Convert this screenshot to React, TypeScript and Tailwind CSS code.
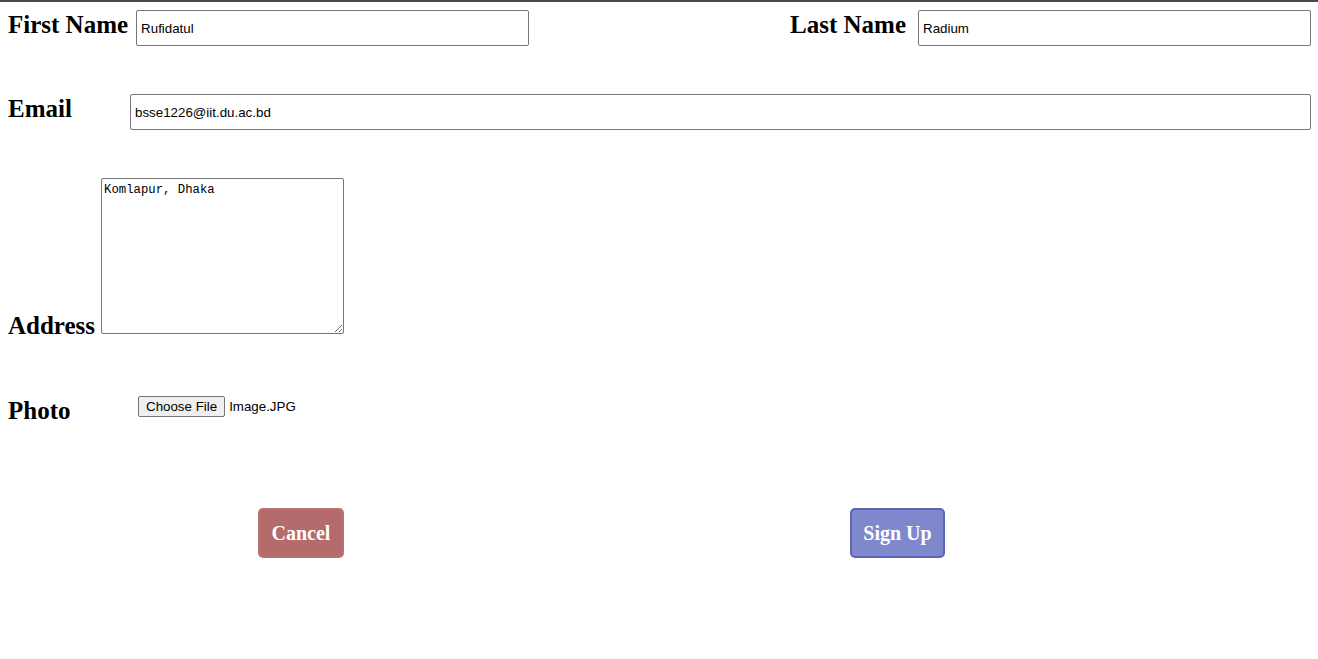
const label = "font-['Liberation_Serif','Times_New_Roman',serif] text-[25px] font-bold leading-none text-black";
const field =
  "h-[36px] rounded-[2px] border border-[#767676] bg-white px-[4px] font-['Liberation_Sans',Arial,sans-serif] text-[13.33px] text-black";

export default function App() {
  return (
    <div className="min-h-[659px] border-t-2 border-[#4a4a4a] bg-white pl-2 pr-[7px]">
      {/* names */}
      <div className="flex items-baseline justify-between pt-[8px]">
        <div className="flex items-baseline">
          <span className={label}>First Name</span>
          <input className={`${field} ml-[8px] w-[393px]`} defaultValue="Rufidatul" />
        </div>
        <div className="flex items-baseline">
          <span className={label}>Last Name</span>
          <input className={`${field} ml-[12px] w-[393px]`} defaultValue="Radium" />
        </div>
      </div>

      {/* email */}
      <div className="mt-[48px] flex items-baseline">
        <span className={`${label} w-[122px] shrink-0`}>Email</span>
        <input className={`${field} flex-1`} defaultValue="bsse1226@iit.du.ac.bd" />
      </div>

      {/* address */}
      <div className="mt-[48px] text-[25px] leading-none">
        <span className={label}>Address</span>
        <textarea
          className="ml-[6px] h-[156px] w-[243px] resize-y rounded-[2px] border border-[#767676] bg-white px-[2px] pt-[4px] align-baseline font-['Liberation_Mono',monospace] text-[12.3px] leading-[15px] text-black"
          defaultValue="Komlapur, Dhaka"
        />
      </div>

      {/* photo */}
      <div className="mt-[56px] flex items-start">
        <span className={`${label} mt-[4px] w-[130px] shrink-0`}>Photo</span>
        <div className="mt-[2px] flex items-center font-['Liberation_Sans',Arial,sans-serif] text-[13.33px] text-black">
          <button className="h-[21px] rounded-[2px] border border-[#767676] bg-[#efefef] px-[7px] leading-none">
            Choose File
          </button>
          <span className="ml-[4px]">Image.JPG</span>
        </div>
      </div>

      {/* actions */}
      <div className="mt-[85px] flex">
        <button className="ml-[250px] h-[50px] w-[86px] rounded-[5px] border-2 border-[#bd7070] bg-[#b46b6b] font-['Liberation_Serif',serif] text-[20px] font-bold text-white">
          Cancel
        </button>
        <button className="ml-[506px] h-[50px] w-[95px] rounded-[5px] border-2 border-[#5e64b4] bg-[#7f88cd] font-['Liberation_Serif',serif] text-[20px] font-bold text-white">
          Sign Up
        </button>
      </div>
    </div>
  );
}
